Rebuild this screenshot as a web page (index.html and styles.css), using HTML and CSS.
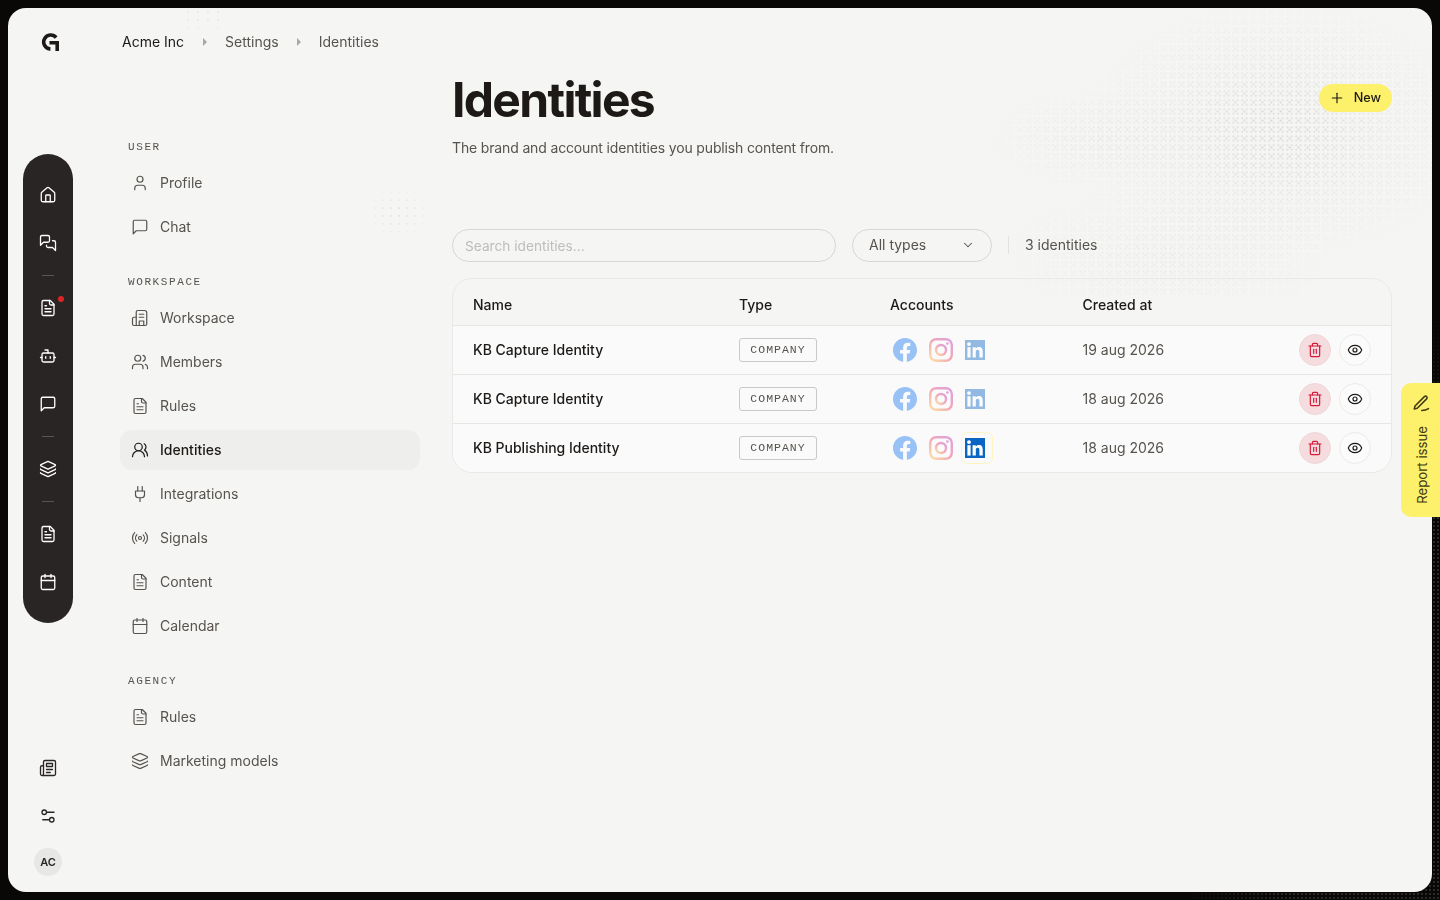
FILE: index.html
```html
<!DOCTYPE html>
<html lang="en">

<head>
    <meta charset="UTF-8">
    <meta name="viewport" content="width=device-width, initial-scale=1.0">
    <title>Identities</title>
    <link rel="stylesheet" href="styles.css">
</head>

<body>
    <!-- icon sprite -->
    <svg class="sprite" xmlns="http://www.w3.org/2000/svg">
        <symbol id="i-home" viewBox="0 0 24 24"><path d="M15 21v-8a1 1 0 0 0-1-1h-4a1 1 0 0 0-1 1v8"/><path d="M3 10a2 2 0 0 1 .709-1.528l7-5.999a2 2 0 0 1 2.582 0l7 5.999A2 2 0 0 1 21 10v9a2 2 0 0 1-2 2H5a2 2 0 0 1-2-2z"/></symbol>
        <symbol id="i-messages" viewBox="0 0 24 24"><path d="M14 9a2 2 0 0 1-2 2H6l-4 4V4a2 2 0 0 1 2-2h8a2 2 0 0 1 2 2z"/><path d="M18 9h2a2 2 0 0 1 2 2v11l-4-4h-6a2 2 0 0 1-2-2v-1"/></symbol>
        <symbol id="i-file" viewBox="0 0 24 24"><path d="M15 2H6a2 2 0 0 0-2 2v16a2 2 0 0 0 2 2h12a2 2 0 0 0 2-2V7Z"/><path d="M14 2v4a2 2 0 0 0 2 2h4"/><path d="M10 9H8"/><path d="M16 13H8"/><path d="M16 17H8"/></symbol>
        <symbol id="i-bot" viewBox="0 0 24 24"><path d="M12 8V4H8"/><rect width="16" height="12" x="4" y="8" rx="2"/><path d="M2 14h2"/><path d="M20 14h2"/><path d="M15 13v2"/><path d="M9 13v2"/></symbol>
        <symbol id="i-chat" viewBox="0 0 24 24"><path d="M21 15a2 2 0 0 1-2 2H7l-4 4V5a2 2 0 0 1 2-2h14a2 2 0 0 1 2 2z"/></symbol>
        <symbol id="i-layers" viewBox="0 0 24 24"><path d="M12.83 2.18a2 2 0 0 0-1.66 0L2.6 6.08a1 1 0 0 0 0 1.83l8.58 3.91a2 2 0 0 0 1.66 0l8.58-3.9a1 1 0 0 0 0-1.83z"/><path d="M2 12a1 1 0 0 0 .58.91l8.6 3.91a2 2 0 0 0 1.65 0l8.58-3.9A1 1 0 0 0 22 12"/><path d="M2 17a1 1 0 0 0 .58.91l8.6 3.91a2 2 0 0 0 1.65 0l8.58-3.9A1 1 0 0 0 22 17"/></symbol>
        <symbol id="i-calendar" viewBox="0 0 24 24"><path d="M8 2v4"/><path d="M16 2v4"/><rect width="18" height="18" x="3" y="4" rx="2"/><path d="M3 10h18"/></symbol>
        <symbol id="i-news" viewBox="0 0 24 24"><path d="M4 22h16a2 2 0 0 0 2-2V4a2 2 0 0 0-2-2H8a2 2 0 0 0-2 2v16a2 2 0 0 1-2 2Zm0 0a2 2 0 0 1-2-2v-9c0-1.1.9-2 2-2h2"/><path d="M18 14h-8"/><path d="M15 18h-5"/><path d="M10 6h8v4h-8V6Z"/></symbol>
        <symbol id="i-sliders" viewBox="0 0 24 24"><path d="M20 7h-9"/><path d="M14 17H5"/><circle cx="17" cy="17" r="3"/><circle cx="7" cy="7" r="3"/></symbol>
        <symbol id="i-user" viewBox="0 0 24 24"><path d="M19 21v-2a4 4 0 0 0-4-4H9a4 4 0 0 0-4 4v2"/><circle cx="12" cy="7" r="4"/></symbol>
        <symbol id="i-users" viewBox="0 0 24 24"><path d="M16 21v-2a4 4 0 0 0-4-4H6a4 4 0 0 0-4 4v2"/><circle cx="9" cy="7" r="4"/><path d="M22 21v-2a4 4 0 0 0-3-3.87"/><path d="M16 3.13a4 4 0 0 1 0 7.75"/></symbol>
        <symbol id="i-users-round" viewBox="0 0 24 24"><path d="M18 21a8 8 0 0 0-16 0"/><circle cx="10" cy="8" r="5"/><path d="M22 20c0-3.37-2-6.5-4-8a5 5 0 0 0-.45-8.3"/></symbol>
        <symbol id="i-building" viewBox="0 0 24 24"><path d="M7 22V4a2 2 0 0 1 2-2h9a3 3 0 0 1 3 3v15a2 2 0 0 1-2 2Z"/><path d="M7 11H4a2 2 0 0 0-2 2v7a2 2 0 0 0 2 2h3"/><path d="M11 7h6"/><path d="M11 11h6"/><path d="M11 22v-6h6v6"/></symbol>
        <symbol id="i-plug" viewBox="0 0 24 24"><path d="M12 22v-5"/><path d="M9 8V2"/><path d="M15 8V2"/><path d="M18 8v5a4 4 0 0 1-4 4h-4a4 4 0 0 1-4-4V8Z"/></symbol>
        <symbol id="i-radio" viewBox="0 0 24 24"><path d="M4.9 19.1C1 15.2 1 8.8 4.9 4.9"/><path d="M7.8 16.2c-2.3-2.3-2.3-6.1 0-8.5"/><circle cx="12" cy="12" r="2"/><path d="M16.2 7.8c2.3 2.3 2.3 6.1 0 8.5"/><path d="M19.1 4.9C23 8.8 23 15.1 19.1 19"/></symbol>
        <symbol id="i-trash" viewBox="0 0 24 24"><path d="M3 6h18"/><path d="M19 6v14c0 1-1 2-2 2H7c-1 0-2-1-2-2V6"/><path d="M8 6V4c0-1 1-2 2-2h4c1 0 2 1 2 2v2"/><path d="M10 11v6"/><path d="M14 11v6"/></symbol>
        <symbol id="i-eye" viewBox="0 0 24 24"><path d="M2.062 12.348a1 1 0 0 1 0-.696 10.75 10.75 0 0 1 19.876 0 1 1 0 0 1 0 .696 10.75 10.75 0 0 1-19.876 0"/><circle cx="12" cy="12" r="3"/></symbol>
        <symbol id="i-facebook" viewBox="0 0 24 24"><path fill="#1877f2" d="M24 12.073c0-6.627-5.373-12-12-12s-12 5.373-12 12c0 5.99 4.388 10.954 10.125 11.854v-8.385H7.078v-3.47h3.047V9.43c0-3.007 1.792-4.669 4.533-4.669 1.312 0 2.686.235 2.686.235v2.953H15.83c-1.491 0-1.956.925-1.956 1.874v2.25h3.328l-.532 3.47h-2.796v8.385C19.612 23.027 24 18.062 24 12.073z"/></symbol>
        <linearGradient id="ig-grad" x1="0" y1="1" x2="1" y2="0">
            <stop offset="0" stop-color="#fdc13f"/>
            <stop offset=".5" stop-color="#ee3a5f"/>
            <stop offset="1" stop-color="#b32fbf"/>
        </linearGradient>
        <symbol id="i-instagram" viewBox="0 0 24 24"><rect x="1.2" y="1.2" width="21.6" height="21.6" rx="6" fill="none" stroke="url(#ig-grad)" stroke-width="2.4"/><circle cx="12" cy="12" r="5" fill="none" stroke="url(#ig-grad)" stroke-width="2.4"/><circle cx="18.4" cy="5.6" r="1.4" fill="#c73aa8" stroke="none"/></symbol>
        <symbol id="i-linkedin" viewBox="0 0 20 20"><rect width="20" height="20" fill="#0a66c2" stroke="none"/><g fill="#fff" stroke="none"><rect x="2.4" y="7.2" width="3.2" height="10.4"/><circle cx="4" cy="4.1" r="1.95"/><path d="M7.6 7.2h3.1v1.400c.6-1 1.800-1.700 3.200-1.700 3 0 3.800 1.900 3.800 4.700v6h-3.300v-5.300c0-1.300-.2-2.500-1.700-2.500s-1.900 1.200-1.900 2.500v5.300H7.600z"/></g></symbol>
    </svg>

    <div class="backdrop"></div>

    <div class="frame">
        <div class="dots"></div>
        <div class="dots-small"></div>
        <div class="dots-top"></div>

        <aside class="rail">
            <a class="logo" href="#">
                <svg viewBox="0 0 17 17" width="18" height="18"><path class="logo-mark" d="M14.300 4.300A6.600 6.600 0 1 0 8.300 15h.6"/><path class="logo-mark" d="M8 9.200h7.300V17"/></svg>
            </a>
            <nav class="rail-pill">
                <a class="rail-item" href="#"><svg class="icon"><use href="#i-home"/></svg></a>
                <a class="rail-item" href="#"><svg class="icon"><use href="#i-messages"/></svg></a>
                <span class="rail-sep"></span>
                <a class="rail-item has-dot" href="#"><svg class="icon"><use href="#i-file"/></svg></a>
                <a class="rail-item" href="#"><svg class="icon"><use href="#i-bot"/></svg></a>
                <a class="rail-item" href="#"><svg class="icon"><use href="#i-chat"/></svg></a>
                <span class="rail-sep"></span>
                <a class="rail-item" href="#"><svg class="icon"><use href="#i-layers"/></svg></a>
                <span class="rail-sep"></span>
                <a class="rail-item" href="#"><svg class="icon"><use href="#i-file"/></svg></a>
                <a class="rail-item" href="#"><svg class="icon"><use href="#i-calendar"/></svg></a>
            </nav>
            <div class="rail-bottom">
                <a class="rail-item" href="#"><svg class="icon"><use href="#i-news"/></svg></a>
                <a class="rail-item" href="#"><svg class="icon"><use href="#i-sliders"/></svg></a>
                <span class="avatar">AC</span>
            </div>
        </aside>

        <div class="content">
            <header class="crumbs">
                <a class="crumb-root" href="#">Acme Inc</a>
                <span class="caret"></span>
                <a href="#">Settings</a>
                <span class="caret"></span>
                <a href="#">Identities</a>
            </header>

            <div class="columns">
                <nav class="side">
                    <h4>User</h4>
                    <a class="side-item" href="#"><svg class="icon"><use href="#i-user"/></svg>Profile</a>
                    <a class="side-item" href="#"><svg class="icon"><use href="#i-chat"/></svg>Chat</a>

                    <h4>Workspace</h4>
                    <a class="side-item" href="#"><svg class="icon"><use href="#i-building"/></svg>Workspace</a>
                    <a class="side-item" href="#"><svg class="icon"><use href="#i-users"/></svg>Members</a>
                    <a class="side-item" href="#"><svg class="icon"><use href="#i-file"/></svg>Rules</a>
                    <a class="side-item active" href="#"><svg class="icon"><use href="#i-users-round"/></svg>Identities</a>
                    <a class="side-item" href="#"><svg class="icon"><use href="#i-plug"/></svg>Integrations</a>
                    <a class="side-item" href="#"><svg class="icon"><use href="#i-radio"/></svg>Signals</a>
                    <a class="side-item" href="#"><svg class="icon"><use href="#i-file"/></svg>Content</a>
                    <a class="side-item" href="#"><svg class="icon"><use href="#i-calendar"/></svg>Calendar</a>

                    <h4>Agency</h4>
                    <a class="side-item" href="#"><svg class="icon"><use href="#i-file"/></svg>Rules</a>
                    <a class="side-item" href="#"><svg class="icon"><use href="#i-layers"/></svg>Marketing models</a>
                </nav>

                <main class="main">
                    <div class="page-head">
                        <div>
                            <h1>Identities</h1>
                            <p class="lead">The brand and account identities you publish content from.</p>
                        </div>
                        <button class="btn-new"><svg class="icon" viewBox="0 0 24 24"><path d="M5 12h14"/><path d="M12 5v14"/></svg><span>New</span></button>
                    </div>

                    <div class="toolbar">
                        <input class="search" type="text" placeholder="Search identities...">
                        <button class="select"><span>All types</span><svg class="icon" viewBox="0 0 24 24"><path d="m6 9 6 6 6-6"/></svg></button>
                        <span class="count">3 identities</span>
                    </div>

                    <table class="grid">
                        <thead>
                            <tr>
                                <th class="col-name">Name</th>
                                <th class="col-type">Type</th>
                                <th class="col-accounts">Accounts</th>
                                <th class="col-date">Created at</th>
                                <th></th>
                            </tr>
                        </thead>
                        <tbody>
                            <tr>
                                <td class="name">KB Capture Identity</td>
                                <td><span class="badge">Company</span></td>
                                <td>
                                    <div class="accounts">
                                        <span class="acc off"><svg class="logo-fb"><use href="#i-facebook"/></svg></span>
                                        <span class="acc off"><svg class="logo-ig"><use href="#i-instagram"/></svg></span>
                                        <span class="acc off"><svg class="logo-in"><use href="#i-linkedin"/></svg></span>
                                    </div>
                                </td>
                                <td class="date">19 aug 2026</td>
                                <td>
                                    <div class="actions">
                                        <button class="round danger"><svg class="icon"><use href="#i-trash"/></svg></button>
                                        <button class="round"><svg class="icon"><use href="#i-eye"/></svg></button>
                                    </div>
                                </td>
                            </tr>
                            <tr>
                                <td class="name">KB Capture Identity</td>
                                <td><span class="badge">Company</span></td>
                                <td>
                                    <div class="accounts">
                                        <span class="acc off"><svg class="logo-fb"><use href="#i-facebook"/></svg></span>
                                        <span class="acc off"><svg class="logo-ig"><use href="#i-instagram"/></svg></span>
                                        <span class="acc off"><svg class="logo-in"><use href="#i-linkedin"/></svg></span>
                                    </div>
                                </td>
                                <td class="date">18 aug 2026</td>
                                <td>
                                    <div class="actions">
                                        <button class="round danger"><svg class="icon"><use href="#i-trash"/></svg></button>
                                        <button class="round"><svg class="icon"><use href="#i-eye"/></svg></button>
                                    </div>
                                </td>
                            </tr>
                            <tr>
                                <td class="name">KB Publishing Identity</td>
                                <td><span class="badge">Company</span></td>
                                <td>
                                    <div class="accounts">
                                        <span class="acc off"><svg class="logo-fb"><use href="#i-facebook"/></svg></span>
                                        <span class="acc off"><svg class="logo-ig"><use href="#i-instagram"/></svg></span>
                                        <span class="acc on"><svg class="logo-in"><use href="#i-linkedin"/></svg></span>
                                    </div>
                                </td>
                                <td class="date">18 aug 2026</td>
                                <td>
                                    <div class="actions">
                                        <button class="round danger"><svg class="icon"><use href="#i-trash"/></svg></button>
                                        <button class="round"><svg class="icon"><use href="#i-eye"/></svg></button>
                                    </div>
                                </td>
                            </tr>
                        </tbody>
                    </table>
                </main>
            </div>
        </div>
    </div>

    <button class="report">
        <svg class="icon" viewBox="0 0 24 24"><path d="M16.500 3.500a2.120 2.120 0 0 1 3 3L7 19l-4 1 1-4Z"/><path d="M13 22c3 0 6-.5 9-2.500"/></svg>
        <span>Report issue</span>
    </button>
</body>

</html>
```

FILE: styles.css
```css
/* Basic Style */
* {
    box-sizing: border-box;
}

html,
body {
    height: 100%;
}

body {
    margin: 0;
    background: #0a0707;
    color: #1c1917;
    font-family: Inter, "Liberation Sans", sans-serif;
    font-size: 14px;
    overflow: hidden;
}

a {
    color: inherit;
    text-decoration: none;
}

button,
input {
    font: inherit;
    outline: none;
}

button {
    cursor: pointer;
}

.sprite {
    position: absolute;
    width: 0;
    height: 0;
}

.icon {
    width: 18px;
    height: 18px;
    fill: none;
    stroke: currentColor;
    stroke-width: 1.75;
    stroke-linecap: round;
    stroke-linejoin: round;
    flex: none;
}

/* Decoration */
.backdrop {
    position: fixed;
    inset: 0;
    background-image: radial-gradient(circle, #2b2a29 0.8px, transparent 1px);
    background-size: 4px 4px;
    -webkit-mask-image: radial-gradient(ellipse 260px 500px at 100% 90%, #000 60%, transparent);
    mask-image: radial-gradient(ellipse 260px 500px at 100% 90%, #000 60%, transparent);
}

.frame {
    position: relative;
    display: flex;
    height: 884px;
    margin: 8px;
    background: #f5f5f4;
    border-radius: 18px;
    overflow: hidden;
}

.dots,
.dots-small,
.dots-top {
    position: absolute;
    pointer-events: none;
}

.dots {
    top: 0;
    right: 0;
    width: 480px;
    height: 290px;
    background-image:
        radial-gradient(circle, #d6d6d4 0.9px, transparent 1.1px),
        radial-gradient(circle, #e1e1df 0.9px, transparent 1.1px);
    background-size: 9px 9px, 4.5px 4.5px;
    -webkit-mask-image:
        radial-gradient(ellipse 42% 46% at 68% 42%, #000 15%, rgba(0, 0, 0, 0.45) 55%, transparent),
        radial-gradient(ellipse 24% 18% at 30% 45%, rgba(0, 0, 0, 0.55), transparent),
        radial-gradient(ellipse 36% 26% at 45% 85%, rgba(0, 0, 0, 0.5), transparent);
    mask-image:
        radial-gradient(ellipse 42% 46% at 68% 42%, #000 15%, rgba(0, 0, 0, 0.45) 55%, transparent),
        radial-gradient(ellipse 24% 18% at 30% 45%, rgba(0, 0, 0, 0.55), transparent),
        radial-gradient(ellipse 36% 26% at 45% 85%, rgba(0, 0, 0, 0.5), transparent);
}

.dots-small {
    top: 180px;
    left: 355px;
    width: 70px;
    height: 50px;
    background-image: radial-gradient(circle, #e2e2e0 0.9px, transparent 1.1px);
    background-size: 8px 8px;
    -webkit-mask-image: radial-gradient(closest-side, #000, transparent);
    mask-image: radial-gradient(closest-side, #000, transparent);
}

.dots-top {
    top: 0;
    left: 175px;
    width: 40px;
    height: 20px;
    background-image: radial-gradient(circle, #ebebe9 0.9px, transparent 1.1px);
    background-size: 10px 8px;
}

/* Rail */
.rail {
    position: relative;
    display: flex;
    flex-direction: column;
    align-items: center;
    width: 80px;
    flex: none;
    padding-bottom: 16px;
}

.logo {
    display: flex;
    align-items: center;
    justify-content: center;
    height: 68px;
    margin-left: 4px;
}

.logo-mark {
    fill: none;
    stroke: #1c1917;
    stroke-width: 3.4;
}

.rail-pill {
    display: flex;
    flex-direction: column;
    align-items: center;
    width: 50px;
    margin-top: 78px;
    padding: 17px 0;
    background: #282524;
    border-radius: 25px;
    color: #fff;
}

.rail-item {
    position: relative;
    display: flex;
    align-items: center;
    justify-content: center;
    width: 48px;
    height: 48px;
}

.rail-sep {
    width: 12px;
    height: 1px;
    margin: 8px 0;
    background: #57534e;
}

.has-dot::after {
    content: "";
    position: absolute;
    top: 12px;
    right: 8px;
    width: 6px;
    height: 6px;
    background: #dc2626;
    border-radius: 50%;
}

.rail-bottom {
    display: flex;
    flex-direction: column;
    align-items: center;
    margin-top: auto;
    color: #282524;
}

.avatar {
    display: flex;
    align-items: center;
    justify-content: center;
    width: 28px;
    height: 28px;
    margin-top: 8px;
    background: #e7e7e5;
    border-radius: 50%;
    font-size: 11px;
    font-weight: 600;
}

/* Breadcrumb + columns */
.content {
    position: relative;
    flex: 1;
    min-width: 0;
    padding: 0 40px 0 32px;
}

.crumbs {
    display: flex;
    align-items: center;
    gap: 18px;
    height: 68px;
    padding: 0 0 1px 2px;
    color: #57534e;
}

.crumb-root {
    margin-right: 1px;
    color: #1c1917;
}

.caret {
    width: 0;
    height: 0;
    border-left: 4px solid #a8a8a6;
    border-top: 4px solid transparent;
    border-bottom: 4px solid transparent;
}

.columns {
    display: flex;
    gap: 32px;
}

/* Sidebar */
.side {
    display: flex;
    flex-direction: column;
    gap: 4px;
    width: 300px;
    flex: none;
    padding-top: 65px;
}

.side h4 {
    height: 12px;
    margin: 25px 0 6px;
    padding-left: 8px;
    color: #57534e;
    font-family: "Liberation Mono", monospace;
    font-size: 11px;
    font-weight: 400;
    line-height: 13px;
    letter-spacing: 1.6px;
    text-transform: uppercase;
}

.side h4:first-child {
    margin-top: 0;
}

.side-item {
    display: flex;
    align-items: center;
    gap: 11px;
    height: 40px;
    padding: 0 0 1px 11px;
    border-radius: 12px;
    color: #57534e;
}

.side-item .icon {
    stroke-width: 1.6;
}

.side-item.active {
    background: #eeeeec;
    color: #1c1917;
    font-weight: 500;
}

/* Main */
.main {
    flex: 1;
    min-width: 0;
}

.page-head {
    display: flex;
    justify-content: space-between;
    align-items: flex-start;
}

h1 {
    margin: 0;
    font-size: 48px;
    font-weight: 700;
    line-height: 48px;
    letter-spacing: -0.035em;
    color: #1c1917;
}

.lead {
    margin: 14px 0 0;
    color: #57534e;
    line-height: 20px;
    letter-spacing: -0.15px;
}

.btn-new {
    display: flex;
    align-items: center;
    gap: 9px;
    height: 28px;
    margin-top: 8px;
    padding: 0 11px 0 10px;
    background: #fdf06a;
    border: 0;
    border-radius: 14px;
    color: #1c1917;
    font-size: 12.7px;
    font-weight: 500;
}

.btn-new span {
    margin-bottom: 1px;
}

.btn-new .icon {
    width: 16px;
    height: 16px;
}

.toolbar {
    display: flex;
    align-items: center;
    height: 33px;
    margin-top: 71px;
}

.search {
    width: 384px;
    height: 33px;
    padding: 0 12px;
    background: transparent;
    border: 1px solid #d6d6d3;
    border-radius: 17px;
    color: #1c1917;
    font-size: 13.7px;
}

.search::placeholder {
    color: #bdbdba;
}

.select {
    display: flex;
    align-items: center;
    justify-content: space-between;
    width: 140px;
    height: 33px;
    margin-left: 16px;
    padding: 0 16px 2px;
    background: transparent;
    border: 1px solid #d6d6d3;
    border-radius: 17px;
    color: #57534e;
}

.select .icon {
    width: 14px;
    height: 14px;
}

.count {
    margin: 0 0 1px 16px;
    padding-left: 16px;
    border-left: 1px solid #e2e2e0;
    color: #57534e;
    line-height: 18px;
}

/* Table */
.grid {
    width: 940px;
    margin-top: 16px;
    table-layout: fixed;
    border-collapse: separate;
    border-spacing: 0;
    border: 1px solid #e9e9e7;
    border-radius: 20px;
}

.grid th,
.grid td {
    padding: 0 20px;
    text-align: left;
    vertical-align: middle;
}

.grid th {
    height: 46px;
    padding-top: 4px;
    font-weight: 500;
    color: #1c1917;
}

.grid td {
    height: 49px;
    background: #fafafa;
    border-top: 1px solid #e6e6e4;
}

.grid tr:last-child td:first-child {
    border-bottom-left-radius: 19px;
}

.grid tr:last-child td:last-child {
    border-bottom-right-radius: 19px;
}

.col-name {
    width: 266px;
}

.col-type {
    width: 151px;
}

.col-accounts {
    width: 192.5px;
}

.col-date {
    width: 192px;
}

.grid td.name {
    padding-bottom: 1px;
    font-weight: 500;
}

.grid td.date {
    padding-bottom: 1px;
    color: #57534e;
}

.badge {
    display: inline-block;
    vertical-align: middle;
    width: 78px;
    height: 24px;
    border: 1px solid #c9c9c6;
    border-radius: 3px;
    color: #57534e;
    font-family: "Liberation Mono", monospace;
    font-size: 11.5px;
    line-height: 21px;
    letter-spacing: 1px;
    text-align: center;
    text-transform: uppercase;
}

.accounts {
    display: flex;
    gap: 4px;
    margin-left: -1px;
}

.acc {
    display: flex;
    align-items: center;
    justify-content: center;
    width: 32px;
    height: 32px;
    border: 1px solid transparent;
    border-radius: 6px;
}

.acc.off svg {
    opacity: 0.43;
}

.acc.on {
    border-color: #fdf6c4;
}

.logo-fb,
.logo-ig {
    width: 24px;
    height: 24px;
}

.logo-in {
    width: 20px;
    height: 20px;
    margin-right: 5px;
}

.actions {
    display: flex;
    justify-content: flex-end;
    gap: 8px;
}

.round {
    display: flex;
    align-items: center;
    justify-content: center;
    width: 32px;
    height: 32px;
    padding: 0;
    background: #fbfbfb;
    border: 1px solid #ebebe9;
    border-radius: 50%;
    color: #1c1917;
}

.round .icon {
    width: 16px;
    height: 16px;
}

.round.danger {
    background: #f5dcdf;
    border-color: #efd6d9;
    color: #d7193a;
}

/* Report tab */
.report {
    position: fixed;
    top: 383px;
    right: 0;
    display: flex;
    flex-direction: column;
    align-items: center;
    gap: 14px;
    width: 39px;
    height: 134px;
    padding: 11px 0 0 3px;
    background: #fdf06a;
    border: 0;
    border-radius: 10px 0 0 10px;
    color: #3f3a12;
    font-size: 13.2px;
}

.report .icon {
    margin-right: 3px;
    stroke-width: 2;
}

.report span {
    writing-mode: vertical-rl;
    transform: rotate(180deg);
}
```
